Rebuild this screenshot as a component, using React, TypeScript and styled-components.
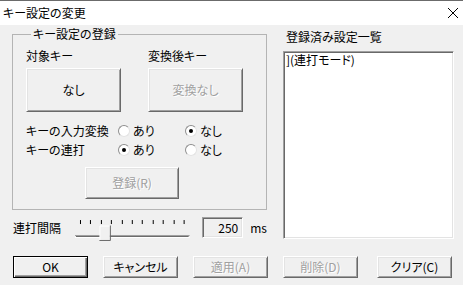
import React from "react";
import styled, { createGlobalStyle } from "styled-components";

const Global = createGlobalStyle`
  html, body { margin: 0; padding: 0; background: #f0f0f0; }
  body {
    font-family: "Noto Sans CJK JP", "Liberation Sans", sans-serif;
    font-size: 12px;
    color: #000;
    font-feature-settings: "palt" 1;
  }
  button { font-feature-settings: "palt" 1; }
  * { box-sizing: border-box; }
`;

const Window = styled.div`
  width: 463px;
  height: 285px;
  background: #f0f0f0;
  border-top: 1px solid #6b6b6b;
  display: flex;
  flex-direction: column;
  overflow: hidden;
`;

const TitleBar = styled.div`
  height: 24px;
  background: #fff;
  display: flex;
  align-items: center;
  justify-content: space-between;
  padding: 0 4px 0 3px;
  line-height: 14px;
`;

const Body = styled.div`
  flex: 1;
  display: flex;
  flex-direction: column;
  padding: 2px 10px 0 12px;
`;

const Top = styled.div`
  display: grid;
  grid-template-columns: 255px 171px;
  column-gap: 16px;
`;

const LeftCol = styled.div`
  display: flex;
  flex-direction: column;
`;

const Group = styled.fieldset`
  margin: 0;
  padding: 0 0 0 13px;
  height: 183px;
  border: 1px solid #b4b4b4;
  min-inline-size: 0;
`;

const Legend = styled.legend`
  padding: 0 2px;
  margin-left: 5px;
  line-height: 14px;
  font-size: 12px;
`;

const TwoCols = styled.div<{ $mt: number }>`
  display: grid;
  grid-template-columns: 122px 95px;
  margin-top: ${(p) => p.$mt}px;
`;

const Label = styled.div`
  line-height: 14px;
  white-space: nowrap;
`;

const Button = styled.button<{ $w: number; $h: number; $disabled?: boolean; $default?: boolean }>`
  width: ${(p) => p.$w}px;
  height: ${(p) => p.$h}px;
  margin: 0;
  padding: 0;
  font-family: inherit;
  font-size: 12px;
  line-height: 14px;
  background: #f0f0f0;
  color: ${(p) => (p.$disabled ? "#a0a0a0" : "#000")};
  text-shadow: ${(p) => (p.$disabled ? "1px 1px 0 #fff" : "none")};
  border: 1px solid;
  border-color: ${(p) => (p.$default ? "#000" : "#fff #696969 #696969 #fff")};
  box-shadow: ${(p) =>
    p.$default
      ? "inset 1px 1px 0 #fff, inset -1px -1px 0 #696969, inset -2px -2px 0 #a0a0a0"
      : "inset 1px 1px 0 #e3e3e3, inset -1px -1px 0 #a0a0a0"};
  display: flex;
  align-items: center;
  justify-content: center;
  white-space: nowrap;
`;

const RadioGrid = styled.div`
  display: grid;
  grid-template-columns: 92px 67px auto;
  grid-auto-rows: 19px;
  align-items: center;
  margin-top: 9px;
`;

const RadioItem = styled.div`
  display: flex;
  align-items: center;
  gap: 3px;
  line-height: 14px;
`;

const RadioCircle = styled.span<{ $checked?: boolean }>`
  width: 12px;
  height: 12px;
  border-radius: 50%;
  background: #fff;
  border: 1px solid;
  border-color: #8e8e8e #e3e3e3 #e3e3e3 #8e8e8e;
  display: flex;
  align-items: center;
  justify-content: center;
  &::after {
    content: "";
    width: 4px;
    height: 4px;
    border-radius: 50%;
    background: ${(p) => (p.$checked ? "#000" : "transparent")};
  }
`;

const RegisterWrap = styled.div`
  margin: 8px 0 0 59px;
`;

const SliderRow = styled.div`
  display: flex;
  align-items: flex-start;
  margin-top: 7px;
  height: 30px;
`;

const SliderLabel = styled.div`
  margin: 4px 0 0 1px;
  width: 62px;
  line-height: 14px;
`;

const EditBox = styled.div`
  width: 41px;
  height: 21px;
  margin-left: 12px;
  border: 1px solid;
  border-color: #a0a0a0 #fff #fff #a0a0a0;
  box-shadow: inset 1px 1px 0 #696969, inset -1px -1px 0 #e3e3e3;
  background: #f0f0f0;
  display: flex;
  align-items: center;
  justify-content: flex-end;
  padding-right: 4px;
  line-height: 14px;
`;

const Unit = styled.div`
  margin: 4px 0 0 7px;
  line-height: 14px;
`;

const ListCol = styled.div`
  display: flex;
  flex-direction: column;
`;

const ListLabel = styled.div`
  margin: 3px 0 0 3px;
  line-height: 14px;
`;

const ListBox = styled.div`
  margin-top: 7px;
  height: 188px;
  background: #fff;
  border: 1px solid;
  border-color: #a0a0a0 #fff #fff #a0a0a0;
  box-shadow: inset 1px 1px 0 #696969, inset -1px -1px 0 #e3e3e3;
  padding: 1px 2px;
  line-height: 14px;
`;

const ButtonBar = styled.div`
  display: flex;
  gap: 15px;
  margin-top: 9px;
  padding: 0 1px 0 1px;
  & > :last-child { margin-left: auto; }
`;

function Radio({ checked, label }: { checked?: boolean; label: string }) {
  return (
    <RadioItem>
      <RadioCircle $checked={checked} />
      <span>{label}</span>
    </RadioItem>
  );
}

function Slider() {
  const ticks = Array.from({ length: 11 }, (_, i) => 5 + Math.round(i * 10.4));
  return (
    <svg width="116" height="30" viewBox="0 0 116 30">
      {ticks.map((x) => (
        <rect key={x} x={x} y={3} width={1} height={4} fill="#000" />
      ))}
      <rect x="0" y="18" width="115" height="1" fill="#a0a0a0" />
      <rect x="1" y="19" width="113" height="1" fill="#696969" />
      <rect x="0" y="20" width="115" height="1" fill="#fff" />
      <path d="M25 9 H35 V23 H25 Z" fill="#f0f0f0" />
      <path d="M25 23 V9 H35" stroke="#fff" fill="none" />
      <path d="M35.5 8.5 V23.5 H24.5" stroke="#696969" fill="none" />
    </svg>
  );
}

export default function App() {
  return (
    <>
      <Global />
      <Window>
        <TitleBar>
          <span>キー設定の変更</span>
          <svg width="12" height="12" viewBox="0 0 12 12">
            <path d="M1 1 L11 11 M11 1 L1 11" stroke="#000" strokeWidth="1" />
          </svg>
        </TitleBar>
        <Body>
          <Top>
            <LeftCol>
              <Group>
                <Legend>キー設定の登録</Legend>
                <TwoCols $mt={8}>
                  <Label>対象キー</Label>
                  <Label>変換後キー</Label>
                </TwoCols>
                <TwoCols $mt={5}>
                  <Button $w={95} $h={44}>なし</Button>
                  <Button $w={95} $h={44} $disabled>変換なし</Button>
                </TwoCols>
                <RadioGrid>
                  <Label>キーの入力変換</Label>
                  <Radio label="あり" />
                  <Radio label="なし" checked />
                  <Label>キーの連打</Label>
                  <Radio label="あり" checked />
                  <Radio label="なし" />
                </RadioGrid>
                <RegisterWrap>
                  <Button $w={94} $h={32} $disabled>登録(R)</Button>
                </RegisterWrap>
              </Group>
              <SliderRow>
                <SliderLabel>連打間隔</SliderLabel>
                <Slider />
                <EditBox>250</EditBox>
                <Unit>ms</Unit>
              </SliderRow>
            </LeftCol>
            <ListCol>
              <ListLabel>登録済み設定一覧</ListLabel>
              <ListBox>](連打モード)</ListBox>
            </ListCol>
          </Top>
          <ButtonBar>
            <Button $w={75} $h={22} $default>OK</Button>
            <Button $w={75} $h={22}>キャンセル</Button>
            <Button $w={75} $h={22} $disabled>適用(A)</Button>
            <Button $w={75} $h={22} $disabled>削除(D)</Button>
            <Button $w={75} $h={22}>クリア(C)</Button>
          </ButtonBar>
        </Body>
      </Window>
    </>
  );
}
